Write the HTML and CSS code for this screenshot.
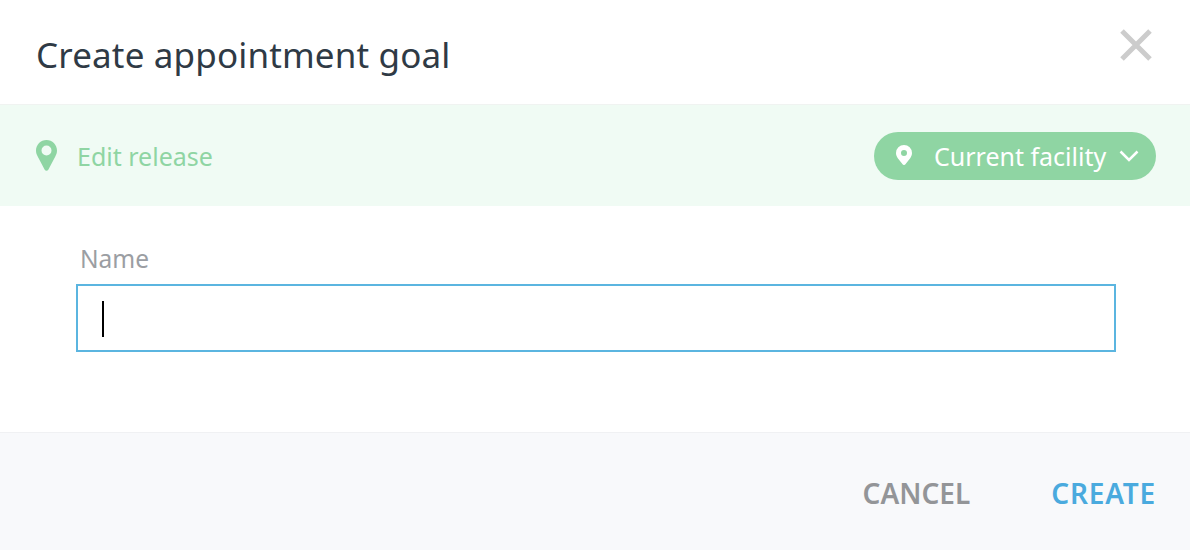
FILE: index.html
```html
<!DOCTYPE html>
<html lang="en">
<head>
  <meta charset="UTF-8"/>
  <title>Create appointment goal</title>
  <link rel="stylesheet" href="styles.css">
</head>
<body>
  <div class="modal">
    <div class="modal-header">
      <h1>Create appointment goal</h1>
      <svg class="close-icon" viewBox="0 0 32 32"><path d="M2 2 L30 30 M30 2 L2 30"/></svg>
    </div>
    <div class="release-bar">
      <div class="release-left">
        <svg class="pin-large" viewBox="0 0 21 31"><path fill-rule="evenodd" d="M10.5 0C4.700 0 0 4.700 0 10.500c0 2.400.7 4 1.700 6l7 13.200c.8 1.500 2.800 1.500 3.600 0l7-13.200c1-2 1.700-3.600 1.700-6C21 4.700 16.300 0 10.500 0zm0 15.500a5 5 0 1 1 0-10 5 5 0 0 1 0 10z"/></svg>
        <span>Edit release</span>
      </div>
      <div class="facility-pill">
        <svg class="pin-small" viewBox="0 0 16 20"><path fill-rule="evenodd" d="M8 0a8 8 0 0 0-8 8c0 2 .8 3.600 1.800 5.200l5 6.300c.6.700 1.800.700 2.400 0l5-6.300C15.200 11.600 16 10 16 8a8 8 0 0 0-8-8zm0 11a3 3 0 1 1 0-6 3 3 0 0 1 0 6z"/></svg>
        <span class="facility-name">Current facility</span>
        <svg class="chevron" viewBox="0 0 20 12"><path d="M1.500 1.500 L10 10 L18.500 1.500"/></svg>
      </div>
    </div>
    <div class="modal-body">
      <label class="field-label">Name</label>
      <div class="text-input"><span class="caret"></span></div>
    </div>
    <div class="modal-footer">
      <span class="btn btn-cancel">CANCEL</span>
      <span class="btn btn-create">CREATE</span>
    </div>
  </div>
</body>
</html>
```
FILE: styles.css
```css
* { box-sizing: border-box; }
html, body { margin: 0; height: 100%; }
body { font-family: "Noto Sans", "Open Sans", sans-serif; background: #fff; overflow: hidden; }
.modal { width: 1190px; height: 550px; display: flex; flex-direction: column; }

.modal-header { height: 105px; padding: 0 37px 0 36px; display: flex; justify-content: space-between; border-bottom: 1px solid #f0f3f1; }
.modal-header h1 { margin: 0; padding-top: 31px; font-size: 35px; line-height: 48px; font-weight: 400; color: #2f3a45; letter-spacing: 0.15px; }
.close-icon { width: 32px; height: 32px; margin: 29px 1px 0 0; fill: none; stroke: #ccc; stroke-width: 5; }

.release-bar { height: 101px; padding: 0 34px 0 36px; display: flex; align-items: center; justify-content: space-between; background: #f0fbf4; color: #8fd5a3; }
.release-left { display: flex; align-items: center; font-size: 25px; }
.pin-large { width: 21px; height: 31px; margin-right: 20px; fill: #8fd5a3; }
.facility-pill { width: 282px; height: 48px; padding: 0 17px 0 22px; display: flex; align-items: center; border-radius: 24px; background: #8fd5a3; color: #fff; font-size: 25px; white-space: nowrap; }
.pin-small { width: 16px; height: 20px; margin: -2px 22px 0 0; fill: #fff; flex: none; }
.facility-name { flex: 1; }
.chevron { width: 20px; height: 12px; fill: none; stroke: #fff; stroke-width: 2.500; flex: none; }

.modal-body { height: 227px; padding: 37px 74px 0 76px; border-bottom: 1px solid #f0f1f3; }
.field-label { display: block; padding-left: 4px; font-size: 24.500px; line-height: 32px; color: #9b9ea3; }
.text-input { height: 68px; margin-top: 9px; padding: 15px 24px; border: 2px solid #5bb5e0; }
.caret { display: block; width: 2px; height: 36px; background: #000; }

.modal-footer { flex: 1; padding: 2px 34px 0; display: flex; align-items: center; justify-content: flex-end; gap: 81px; background: #f8f9fb; }
.btn { font-size: 28px; font-weight: 600; line-height: 38px; }
.btn-cancel { color: #939598; }
.btn-create { color: #4aaade; letter-spacing: 0.8px; }
```
